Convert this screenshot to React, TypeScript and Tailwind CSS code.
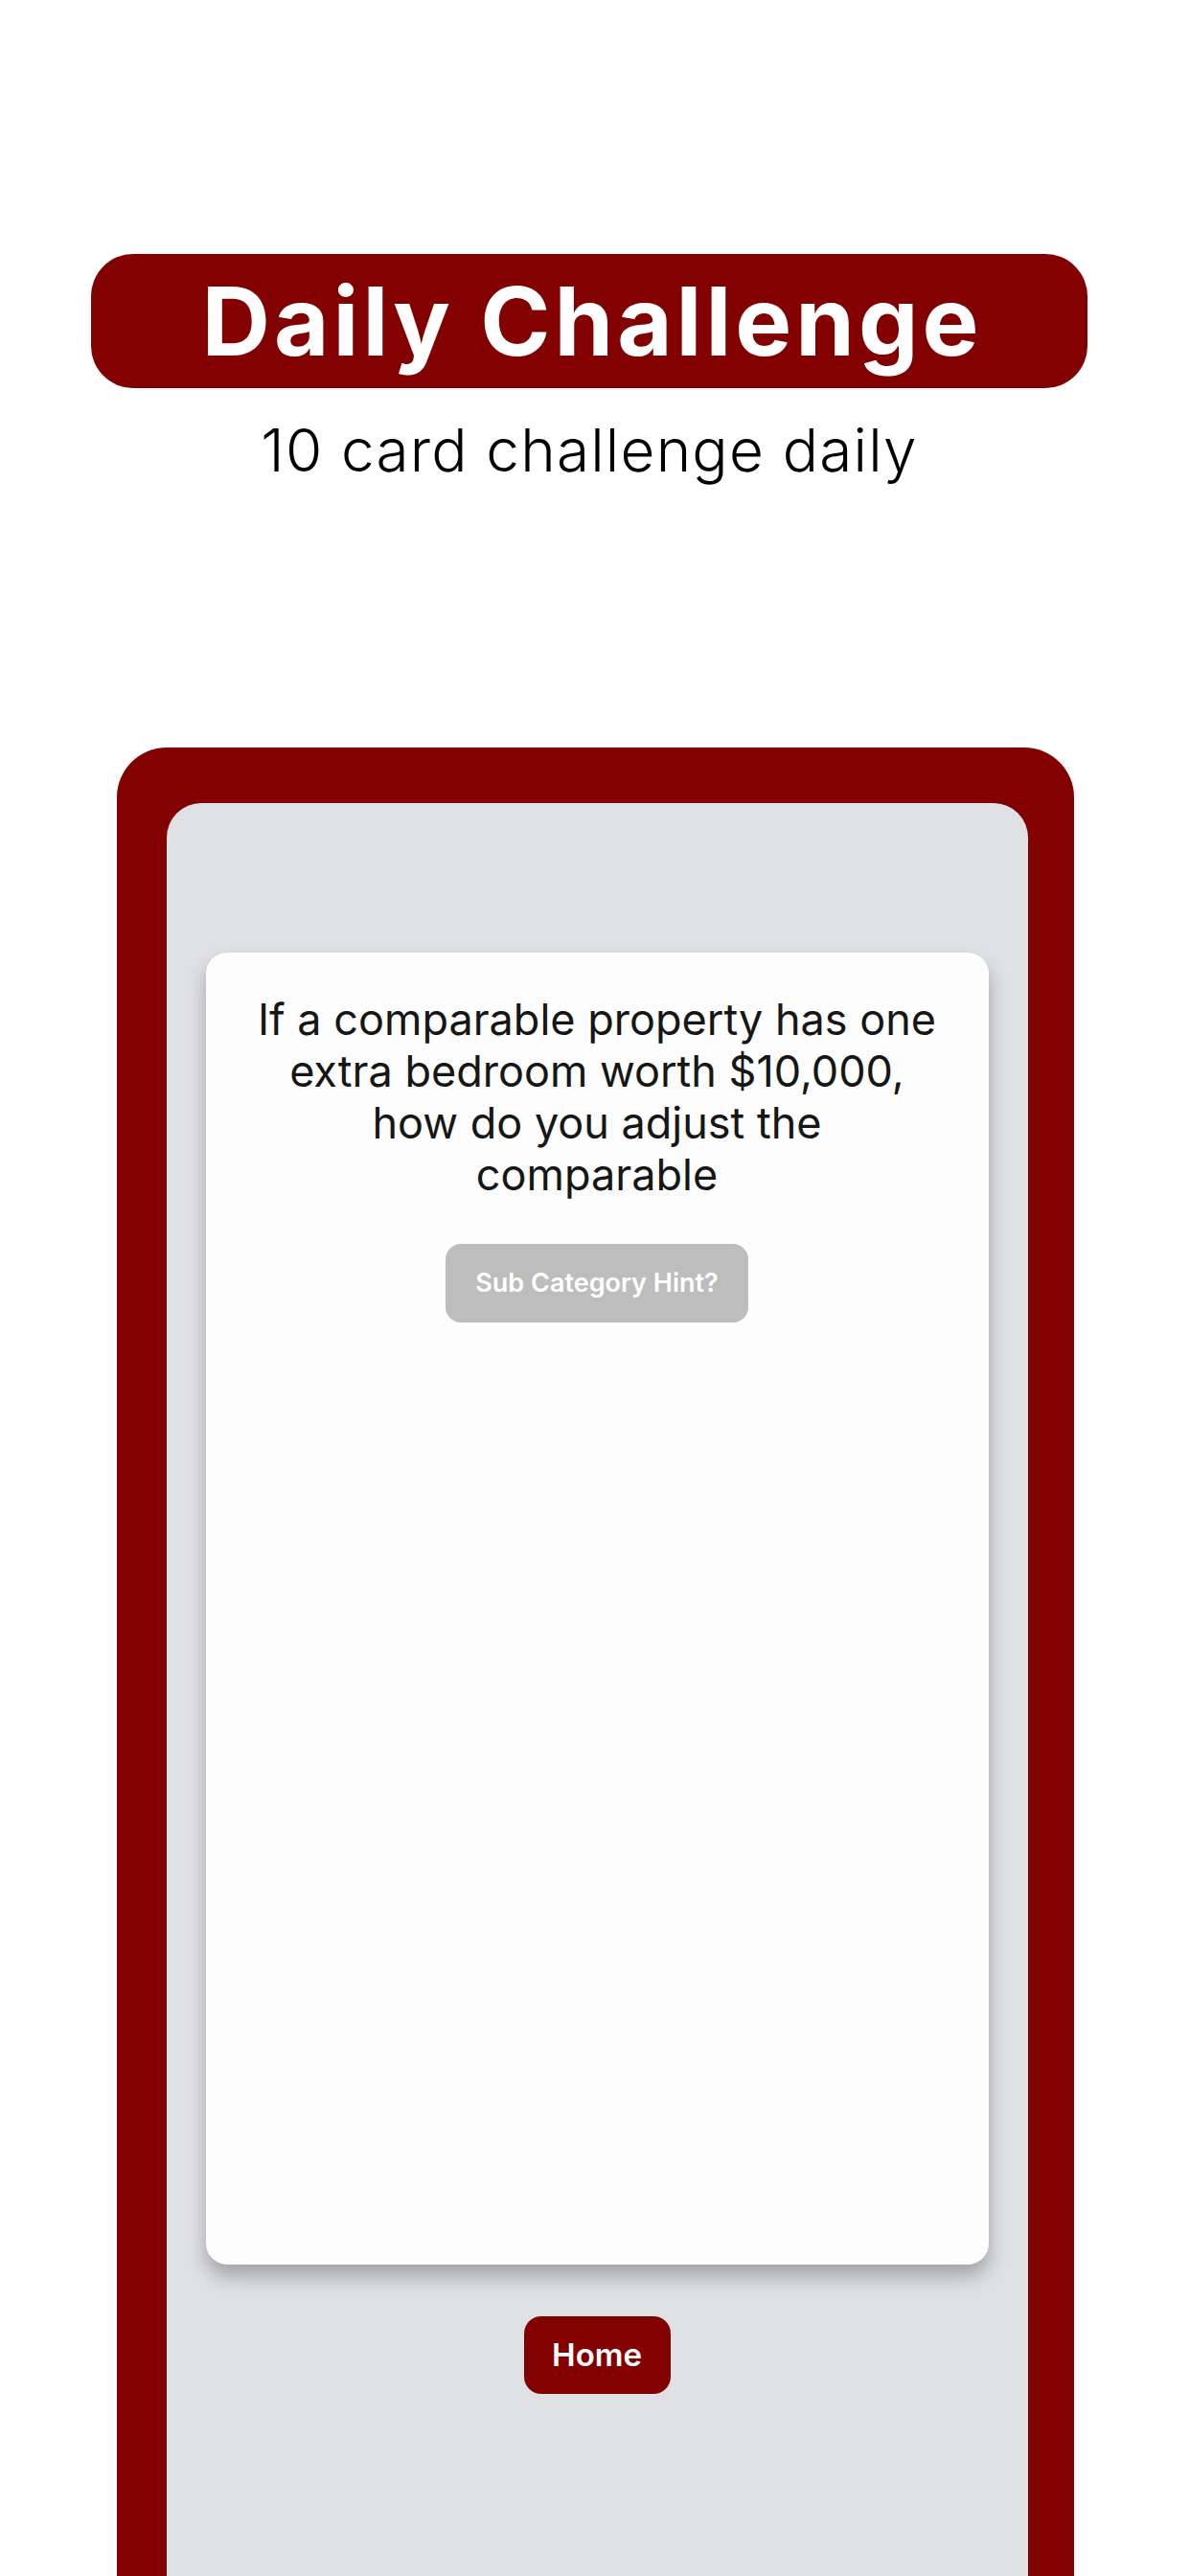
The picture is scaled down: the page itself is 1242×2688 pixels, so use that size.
export default function App() {
  return (
    <div className="flex h-[2688px] w-[1242px] flex-col items-center overflow-hidden bg-white font-['Inter','Liberation_Sans',sans-serif]">
      <header className="mt-[265px] flex w-[1040px] -translate-x-[6px] flex-col items-center">
        <div className="flex h-[140px] w-full items-center justify-center rounded-[44px] bg-[#820000]">
          <h1 className="translate-x-[3px] text-[99px] font-bold leading-none tracking-[4px] text-white">Daily Challenge</h1>
        </div>
        <p className="mt-[25px] text-[62px] font-light leading-[80px] tracking-[1.2px] text-black">10 card challenge daily</p>
      </header>

      <section className="mt-[270px] flex w-[999px] flex-1 flex-col rounded-t-[52px] bg-[#820000] pl-[52px] pr-[48px] pt-[58px]">
        <div className="flex flex-1 flex-col items-center rounded-t-[36px] bg-[#e0e1e5] px-[41px] pt-[156px]">
          <div className="flex h-[1369px] w-full flex-col items-center rounded-[22px] bg-[#fdfdfd] px-[48px] pt-[43px] shadow-[0_12px_20px_rgba(0,0,0,0.28)]">
            <p className="text-center text-[45px] leading-[54px] text-[#161616]">
              If a comparable property has one extra bedroom worth $10,000, how do you adjust the comparable
            </p>
            <button className="mt-[45px] flex h-[82px] w-[316px] items-center justify-center rounded-[16px] bg-[#bdbdbd] text-[27px] font-semibold text-white">
              Sub Category Hint?
            </button>
          </div>
          <button className="mt-[54px] flex h-[81px] w-[153px] items-center justify-center rounded-[18px] bg-[#820000] text-[33px] font-semibold text-white">
            Home
          </button>
        </div>
      </section>
    </div>
  )
}
